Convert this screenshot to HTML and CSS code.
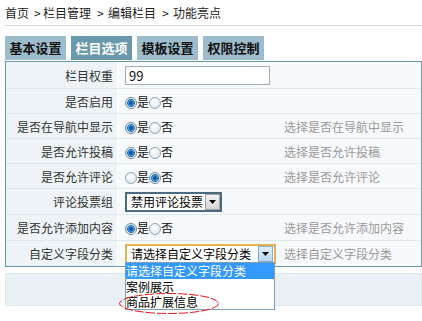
FILE: index.html
```html
<!DOCTYPE html>
<html lang="zh-CN">

<head>
    <meta charset="UTF-8">
    <title>编辑栏目</title>
    <link rel="stylesheet" href="styles.css">
</head>

<body>
    <div class="crumb">首页<span class="sep first">&gt;</span>栏目管理<span class="sep">&gt;</span>编辑栏目<span class="sep">&gt;</span>功能亮点</div>

    <div class="tabs">
        <div class="tab">基本设置</div>
        <div class="tab on">栏目选项</div>
        <div class="tab">模板设置</div>
        <div class="tab">权限控制</div>
    </div>

    <table class="form">
        <tr class="r-first">
            <td class="label">栏目权重</td>
            <td class="val"><span class="text">99</span></td>
            <td class="desc"></td>
        </tr>
        <tr>
            <td class="label">是否启用</td>
            <td class="val">
                <span class="radio on"></span>是<span class="radio"></span>否
            </td>
            <td class="desc"></td>
        </tr>
        <tr>
            <td class="label">是否在导航中显示</td>
            <td class="val">
                <span class="radio on"></span>是<span class="radio"></span>否
            </td>
            <td class="desc">选择是否在导航中显示</td>
        </tr>
        <tr>
            <td class="label">是否允许投稿</td>
            <td class="val">
                <span class="radio on"></span>是<span class="radio"></span>否
            </td>
            <td class="desc">选择是否允许投稿</td>
        </tr>
        <tr>
            <td class="label">是否允许评论</td>
            <td class="val">
                <span class="radio"></span>是<span class="radio on"></span>否
            </td>
            <td class="desc">选择是否允许评论</td>
        </tr>
        <tr class="r-sel">
            <td class="label">评论投票组</td>
            <td class="val">
                <span class="sel sel-vote">
                    <span class="txt">禁用评论投票</span>
                    <span class="btn"><svg width="7" height="4" viewBox="0 0 7 4"><path d="M0 0h7L3.5 4z" fill="#000"/></svg></span>
                </span>
            </td>
            <td class="desc"></td>
        </tr>
        <tr class="r-sel">
            <td class="label">是否允许添加内容</td>
            <td class="val">
                <span class="radio on"></span>是<span class="radio"></span>否
            </td>
            <td class="desc">选择是否允许添加内容</td>
        </tr>
        <tr class="r-sel r-last">
            <td class="label">自定义字段分类</td>
            <td class="val">
                <span class="dd">
                    <span class="sel sel-field">
                        <span class="txt">请选择自定义字段分类</span>
                        <span class="btn"><svg width="7" height="4" viewBox="0 0 7 4"><path d="M0 0h7L3.5 4z" fill="#000"/></svg></span>
                    </span>
                    <span class="list">
                        <span class="opt on">请选择自定义字段分类</span>
                        <span class="opt">案例展示</span>
                        <span class="opt">商品扩展信息</span>
                        <!-- 红圈标注 -->
                        <svg class="mark" width="102" height="23" viewBox="0 0 102 23">
                            <ellipse cx="51" cy="11.5" rx="49.5" ry="10" fill="none" stroke="#e8141a" stroke-width="1" stroke-dasharray="9 2"/>
                        </svg>
                    </span>
                </span>
            </td>
            <td class="desc">选择自定义字段分类</td>
        </tr>
    </table>

    <div class="bar"></div>
</body>

</html>
```

FILE: styles.css
```css
body {
    margin: 0;
    min-height: 100vh;
    background-color: #fff;
    font-family: "Noto Sans CJK SC", "Noto Sans", sans-serif;
    font-size: 12px;
    color: #333;
}

.crumb {
    margin-left: 5px;
    height: 25px;
    line-height: 25px;
    border-bottom: 1px solid #cdd8df;
    color: #222;
}

.sep {
    display: inline-block;
    box-sizing: border-box;
    width: 17px;
    padding-left: 6px;
}

.sep.first {
    width: 14px;
    padding-left: 5px;
}

.tabs {
    display: flex;
    gap: 5px;
    margin: 10px 0 1px 5px;
}

.tab {
    width: 61px;
    height: 24px;
    line-height: 24px;
    text-align: center;
    background-color: #9dbdcc;
    color: #111;
    font-size: 13px;
    font-weight: bold;
}

.tab.on {
    background-color: #6a99ae;
    color: #fff;
}

.form {
    margin-left: 5px;
    width: 417px;
    border-collapse: separate;
    border-spacing: 0;
    border: 1px solid #6a9ab0;
}

.form td {
    box-sizing: border-box;
    height: 25px;
    padding: 0;
    border-bottom: 1px solid #dde8ee;
    background-color: #f7fafc;
    white-space: nowrap;
}

.form .r-first td {
    height: 27px;
}

.form .r-sel td {
    height: 26px;
}

.form .r-last td {
    height: 25px;
    border-bottom: none;
}

.label {
    width: 112px;
    padding-right: 4px !important;
    text-align: right;
    background-color: #edf3f6 !important;
    border-right: 1px solid #fff;
}

.val {
    width: 162px;
    padding-left: 7px !important;
    color: #111;
}

.desc {
    padding-left: 4px !important;
    color: #999;
}

.text {
    display: inline-block;
    box-sizing: border-box;
    width: 145px;
    height: 19px;
    line-height: 17px;
    padding: 0 3px;
    border: 1px solid #a5acb2;
    background-color: #fff;
    font-size: 13px;
    vertical-align: middle;
}

.radio {
    display: inline-block;
    box-sizing: border-box;
    width: 12px;
    height: 12px;
    border-radius: 50%;
    border: 1px solid #8ea5b8;
    background: radial-gradient(circle at 40% 35%, #fff 0, #eef2f5 50%, #d3dbe2 100%);
    vertical-align: -2px;
}

.radio.on {
    border-color: #6f8ca4;
    background: radial-gradient(circle at 50% 50%, #0a3f7a 0, #1c6cc0 2px, #4aa7ec 3px, #2a6aa8 3.6px, #e9eef2 4.2px, #d3dbe2 100%);
}

.sel {
    display: inline-flex;
    align-items: center;
    box-sizing: border-box;
    height: 20px;
    background-color: #fff;
    vertical-align: middle;
}

.sel .txt {
    flex: 1;
    padding-left: 4px;
    font-size: 12px;
    line-height: 16px;
    color: #000;
}

.sel .btn {
    display: flex;
    align-items: center;
    justify-content: center;
    box-sizing: border-box;
    width: 15px;
    height: 16px;
}

.sel-vote {
    width: 97px;
    border: 2px solid #4d6b80;
}

.sel-vote .btn {
    background: linear-gradient(#f4f4f4, #d4d4d4);
    border: 1px solid #a3a3a3;
}

.sel-field {
    width: 151px;
    border: 2px solid #e3b350;
}

.sel-field .btn {
    margin-right: 1px;
    background: linear-gradient(#e0effc, #b9d6f3);
    border: 1px solid #86acd6;
}

.dd {
    position: relative;
    display: inline-block;
    vertical-align: middle;
}

.list {
    position: absolute;
    left: 0;
    top: 19px;
    z-index: 2;
    box-sizing: border-box;
    width: 150px;
    border: 1px solid #7f9db9;
    background-color: #fff;
}

.opt {
    display: block;
    height: 15px;
    line-height: 15px;
    color: #000;
}

.opt.on {
    height: 16px;
    line-height: 16px;
    background-color: #3399ff;
    color: #fff;
}

.mark {
    position: absolute;
    left: -8px;
    top: 29px;
}

.bar {
    margin: 6px 0 0 5px;
    box-sizing: border-box;
    width: 417px;
    height: 33px;
    background-color: #e9f1f5;
    border: 1px solid #dce7ed;
}
```
